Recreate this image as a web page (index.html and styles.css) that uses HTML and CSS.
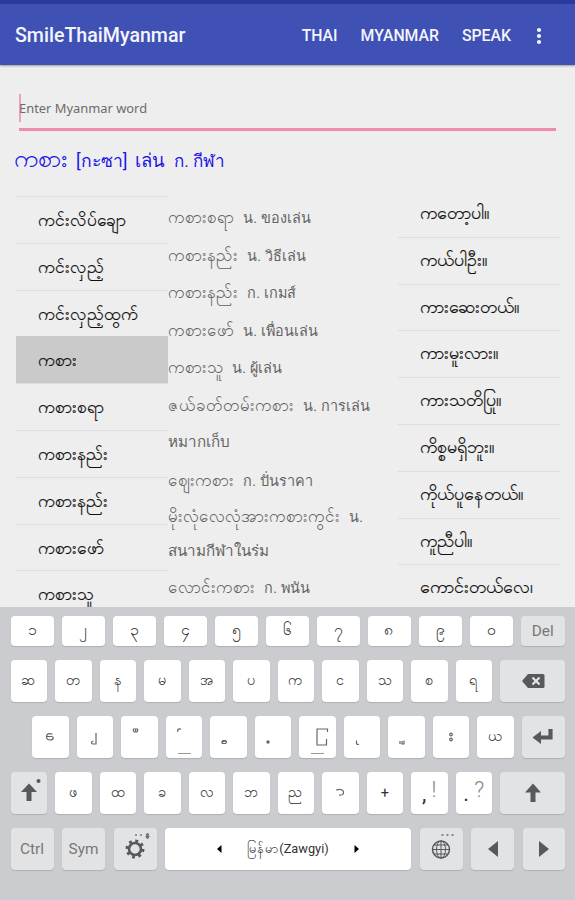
FILE: index.html
```html
<!DOCTYPE html>
<html lang="my">
<head>
    <meta charset="UTF-8">
    <meta name="viewport" content="width=device-width, initial-scale=1.0">
    <title>SmileThaiMyanmar</title>
    <link rel="stylesheet" href="styles.css">
</head>
<body>
    <div class="screen">
        <header class="app-bar">
            <h1 class="app-title">SmileThaiMyanmar</h1>
            <nav class="app-menu">
                <span class="menu-thai">THAI</span>
                <span class="menu-myanmar">MYANMAR</span>
                <span class="menu-speak">SPEAK</span>
                <svg class="menu-more" width="6" height="18" viewBox="0 0 6 18"><circle cx="3" cy="3" r="2.1"/><circle cx="3" cy="9" r="2.1"/><circle cx="3" cy="15" r="2.1"/></svg>
            </nav>
        </header>

        <div class="search">
            <span class="caret"></span>
            <span class="hint">Enter Myanmar word</span>
        </div>

        <div class="headword"><span class="head-my">ကစား</span><span>[กะซา]</span><b>เล่น</b><span class="head-th">ก. กีฬา</span></div>

        <main class="columns">
            <ul class="words">
                <li>ကင်းလိပ်ချော</li>
                <li>ကင်းလှည့်</li>
                <li>ကင်းလှည့်ထွက်</li>
                <li class="selected">ကစား</li>
                <li>ကစားစရာ</li>
                <li>ကစားနည်း</li>
                <li>ကစားနည်း</li>
                <li>ကစားဖော်</li>
                <li>ကစားသူ</li>
            </ul>
            <div class="related">
                <p>ကစားစရာ <span class="th">น. ของเล่น</span></p>
                <p>ကစားနည်း <span class="th">น. วิธีเล่น</span></p>
                <p>ကစားနည်း <span class="th">ก. เกมส์</span></p>
                <p>ကစားဖော် <span class="th">น. เพื่อนเล่น</span></p>
                <p>ကစားသူ <span class="th">น. ผู้เล่น</span></p>
                <p>ဇယ်ခတ်တမ်းကစား <span class="th">น. การเล่น</span></p>
                <p class="wrapped">หมากเก็บ</p>
                <p>ဈေးကစား <span class="th">ก. ปั่นราคา</span></p>
                <p class="tight">မိုးလုံလေလုံအားကစားကွင်း <span class="th">น.</span></p>
                <p class="tight wrapped">สนามกีฬาในร่ม</p>
                <p>လောင်းကစား <span class="th">ก. พนัน</span></p>
            </div>
            <ul class="phrases">
                <li>ကတော့ပါ။</li>
                <li>ကယ်ပါဦး။</li>
                <li>ကားဆေးတယ်။</li>
                <li>ကားမူးလား။</li>
                <li>ကားသတိပြု။</li>
                <li>ကိစ္စမရှိဘူး။</li>
                <li>ကိုယ်ပူနေတယ်။</li>
                <li>ကူညီပါ။</li>
                <li>ကောင်းတယ်လေ၊</li>
            </ul>
        </main>

        <div class="keyboard">
            <div class="row row-digits">
                <span class="key">၁</span><span class="key">၂</span><span class="key">၃</span><span class="key">၄</span><span class="key">၅</span><span class="key">၆</span><span class="key">၇</span><span class="key">၈</span><span class="key">၉</span><span class="key">၀</span>
                <span class="key fn last">Del</span>
            </div>
            <div class="row">
                <span class="key">ဆ</span><span class="key">တ</span><span class="key">န</span><span class="key">မ</span><span class="key">အ</span><span class="key">ပ</span><span class="key">က</span><span class="key">င</span><span class="key">သ</span><span class="key">စ</span><span class="key">ရ</span>
                <span class="key fn last"><svg width="24" height="14" viewBox="0 0 24 14"><path d="M7 0h15q1.500 0 1.500 1.500v11q0 1.500-1.500 1.500H7L1 7z" fill="#58595b"/><path d="M11.500 3.500l7 7M18.500 3.500l-7 7" stroke="#e4e5e6" stroke-width="2.200"/></svg></span>
            </div>
            <div class="row row-indent">
                <!-- combining signs are drawn without their dotted base circle -->
                <span class="key"><svg width="36" height="42" viewBox="0 0 36 42"><path d="M20.500 18.300q-5.500-2-6 2.200 0 3.500 3.500 3.500 3.200 0 3.200-2 0-1.500-1.700-1.500h-4.500" class="thin"/></svg></span>
                <span class="key"><svg width="36" height="42" viewBox="0 0 36 42"><path d="M19 17v11h-3q-1.500 0-1.500-1.500t2-1.500" class="thin"/></svg></span>
                <span class="key"><svg width="36" height="42" viewBox="0 0 36 42"><path d="M12.500 12.500q-.5 4 1.500 3.500 1.500-.5 0-3h2.500q.8 3-1.500 3" class="thin"/></svg></span>
                <span class="key"><svg width="36" height="42" viewBox="0 0 36 42"><path d="M12 16q-1.500-3.500 3-3" class="thin"/><path d="M12 37.500h13" class="mark-line"/></svg></span>
                <span class="key"><svg width="36" height="42" viewBox="0 0 36 42"><path d="M16 24.500h-3q-2 1.500-.5 3h3q2.500-2.500-.5-2.500l-2.500 1" class="thin"/></svg></span>
                <span class="key"><svg width="36" height="42" viewBox="0 0 36 42"><circle cx="13" cy="26" r="1.700" fill="#666"/></svg></span>
                <span class="key"><svg width="36" height="42" viewBox="0 0 36 42"><path d="M28.500 16v-3H18v16h9.500v-6" class="thin"/><path d="M12 37.500h13" class="mark-line"/></svg></span>
                <span class="key"><svg width="36" height="42" viewBox="0 0 36 42"><path d="M12.500 24.500v3q0 1 2.500 1" class="thin"/></svg></span>
                <span class="key"><svg width="36" height="42" viewBox="0 0 36 42"><path d="M12 28v-3M14 25v3h2v-3.500" class="thin"/></svg></span>
                <span class="key"><svg width="36" height="42" viewBox="0 0 36 42"><g class="thin"><circle cx="18" cy="18.500" r="1.300"/><circle cx="18" cy="23.500" r="1.300"/></g></svg></span>
                <span class="key">ယ</span>
                <span class="key fn last"><svg width="24" height="20" viewBox="0 0 24 20"><path d="M19.500 2v8.500H8" fill="none" stroke="#58595b" stroke-width="4.200"/><path d="M10 4v13L1.500 10.500z" fill="#58595b"/></svg></span>
            </div>
            <div class="row">
                <span class="key fn"><svg width="36" height="42" viewBox="0 0 36 42"><path d="M18 11.500l8 8.500h-5.500v9h-5v-9H10z" fill="#58595b"/><circle cx="27.500" cy="9" r="2" fill="#58595b"/></svg></span>
                <span class="key">ဖ</span><span class="key">ထ</span><span class="key">ခ</span><span class="key">လ</span><span class="key">ဘ</span><span class="key">ည</span>
                <span class="key"><svg width="36" height="42" viewBox="0 0 36 42"><path d="M14 18q6-2 7.500 1.500.5 4-4.500 3.500" class="thin"/></svg></span>
                <span class="key">+</span>
                <span class="key double"><b>,</b><i>!</i></span>
                <span class="key double"><b>.</b><i>?</i></span>
                <span class="key fn last"><svg width="18" height="20" viewBox="0 0 18 20"><path d="M9 .5l8 9h-5.500V19h-5V9.500H1z" fill="#58595b"/></svg></span>
            </div>
            <div class="row row-bottom">
                <span class="key fn">Ctrl</span>
                <span class="key fn">Sym</span>
                <span class="key fn"><svg width="42" height="42" viewBox="0 0 42 42"><circle cx="21" cy="21" r="6" fill="none" stroke="#58595b" stroke-width="2.600"/><circle cx="21" cy="21" r="8" fill="none" stroke="#58595b" stroke-width="3" stroke-dasharray="2.800 3.483"/><g fill="#777"><circle cx="22" cy="7" r="1"/><circle cx="27" cy="7" r="1"/><rect x="32" y="5" width="3" height="4" rx="1.500"/><path d="M31 8h5l-2 3h-1z"/></g></svg></span>
                <span class="key space"><svg width="5" height="8" viewBox="0 0 5 8"><path d="M4.500 0v8L0 4z"/></svg><span class="lang">မြန်မာ(Zawgyi)</span><svg width="5" height="8" viewBox="0 0 5 8"><path d="M.5 0v8L5 4z"/></svg></span>
                <span class="key fn"><svg width="42" height="42" viewBox="0 0 42 42"><g fill="none" stroke="#58595b" stroke-width="1"><circle cx="21" cy="21.500" r="8.500" stroke-width="1.500"/><ellipse cx="21" cy="21.500" rx="4.500" ry="8.500"/><path d="M21 13v17M12.500 21.500h17M14 17h14M14 26h14"/></g><g fill="#777"><circle cx="22.500" cy="7" r="1.100"/><circle cx="27.500" cy="7" r="1.100"/><circle cx="32.500" cy="7" r="1.100"/></g></svg></span>
                <span class="key fn"><svg width="12" height="16" viewBox="0 0 12 16"><path d="M11 0v16L1 8z" fill="#58595b"/></svg></span>
                <span class="key fn last"><svg width="12" height="16" viewBox="0 0 12 16"><path d="M1 0v16l10-8z" fill="#58595b"/></svg></span>
            </div>
        </div>
    </div>
</body>
</html>
```
FILE: styles.css
```css
* {
    box-sizing: border-box;
}

body {
    margin: 0;
    font-family: Roboto, "Noto Sans", sans-serif;
    background-color: #eeeeee;
}

.screen {
    width: 575px;
    height: 900px;
    display: flex;
    flex-direction: column;
    overflow: hidden;
}

.app-bar {
    height: 65px;
    flex: none;
    display: flex;
    align-items: center;
    border-top: 4px solid #2b3a9b;
    background-color: #3f51b5;
    color: #f4f5fc;
    padding: 2px 33px 0 15px;
    box-shadow: 0 1px 2px rgba(0, 0, 0, 0.35);
}

.app-title {
    margin: 0;
    font-size: 19.6px;
    font-weight: 500;
}

.app-menu {
    margin-left: auto;
    display: flex;
    align-items: center;
    font-size: 15.8px;
    font-weight: 500;
}

.menu-myanmar,
.menu-speak {
    margin-left: 23px;
}

.menu-more {
    margin-left: 25px;
    fill: #f4f5fc;
}

.search {
    height: 66px;
    flex: none;
    margin: 0 19px;
    padding-top: 23px;
    display: flex;
    align-items: center;
    border-bottom: 3px solid #ee8dab;
}

.caret {
    width: 2px;
    height: 28px;
    background-color: #f0a0b8;
}

.hint {
    margin-left: -2px;
    font-family: "Noto Sans", sans-serif;
    font-size: 12.9px;
    color: #6c6c6c;
}

.headword {
    height: 65px;
    flex: none;
    display: flex;
    align-items: baseline;
    padding-left: 14px;
    line-height: 60px;
    font-size: 17.6px;
    color: #1c14e6;
    white-space: nowrap;
}

.headword b {
    margin: 0 9px 0 8px;
    font-size: 18.5px;
    font-weight: 500;
}

.head-my {
    margin-right: 9px;
    font-size: 25px;
    line-height: 56px;
}

.head-th {
    font-size: 17px;
}

.columns {
    height: 411px;
    flex: none;
    display: flex;
    padding-left: 16px;
    overflow: hidden;
}

.words,
.phrases {
    list-style: none;
    margin: 0;
    padding: 0;
    font-size: 17.4px;
    color: #111111;
    -webkit-text-stroke: 0.2px #111111;
}

.words li,
.phrases li {
    height: 46.8px;
    line-height: 46px;
    padding-left: 22px;
    border-top: 1px solid #dedede;
    white-space: nowrap;
}

.words {
    width: 152px;
}

.words .selected {
    background-color: #cacaca;
    border-color: #cacaca;
}

.related {
    width: 230px;
    padding-top: 3px;
    font-size: 16.9px;
    color: #646464;
}

.related p {
    margin: 0;
    height: 37.5px;
    line-height: 37.5px;
    white-space: nowrap;
}

.related .th {
    margin-left: 5px;
    font-size: 14.4px;
}

.related .wrapped {
    font-size: 15.2px;
}

.related .tight {
    height: 35px;
    line-height: 35px;
}

.phrases {
    width: 162px;
    margin-top: -6px;
    font-size: 17.9px;
}

.phrases li {
    line-height: 44px;
}

.keyboard {
    flex: 1;
    background-color: #cbccd0;
    padding: 9px 10px 0 10.5px;
    display: flex;
    flex-direction: column;
    gap: 14px;
}

.row {
    height: 42px;
    display: flex;
    gap: 8px;
}

.row-digits {
    height: 30px;
}

.row-indent {
    padding-left: 21.5px;
}

.key {
    width: 36.5px;
    flex: none;
    display: flex;
    align-items: center;
    justify-content: center;
    overflow: hidden;
    border-radius: 4px;
    background-color: #ffffff;
    box-shadow: 0 1px 1px #aeb0b4;
    color: #333333;
    font-size: 14.5px;
}

.key svg {
    flex: none;
}

.row-digits .key,
.row-bottom .key {
    width: 43px;
}

.row-digits .key {
    font-size: 16px;
}

.row-bottom {
    gap: 8.5px;
}

.key.fn {
    background-color: #e2e3e4;
    color: #77787a;
    font-size: 15.4px;
}

.row .last {
    width: auto;
    flex: 1;
}

.thin {
    fill: none;
    stroke: #666666;
    stroke-width: 1.2;
}

.mark-line {
    stroke: #999999;
    stroke-width: 1;
}

.double b {
    font-size: 22px;
    font-weight: 400;
}

.double i {
    font-size: 22px;
    font-style: normal;
    font-weight: 300;
    color: #888888;
    margin: -8px 0 0 5px;
}

.row-bottom .space {
    width: 246px;
    gap: 25px;
    font-size: 12.8px;
}
```
